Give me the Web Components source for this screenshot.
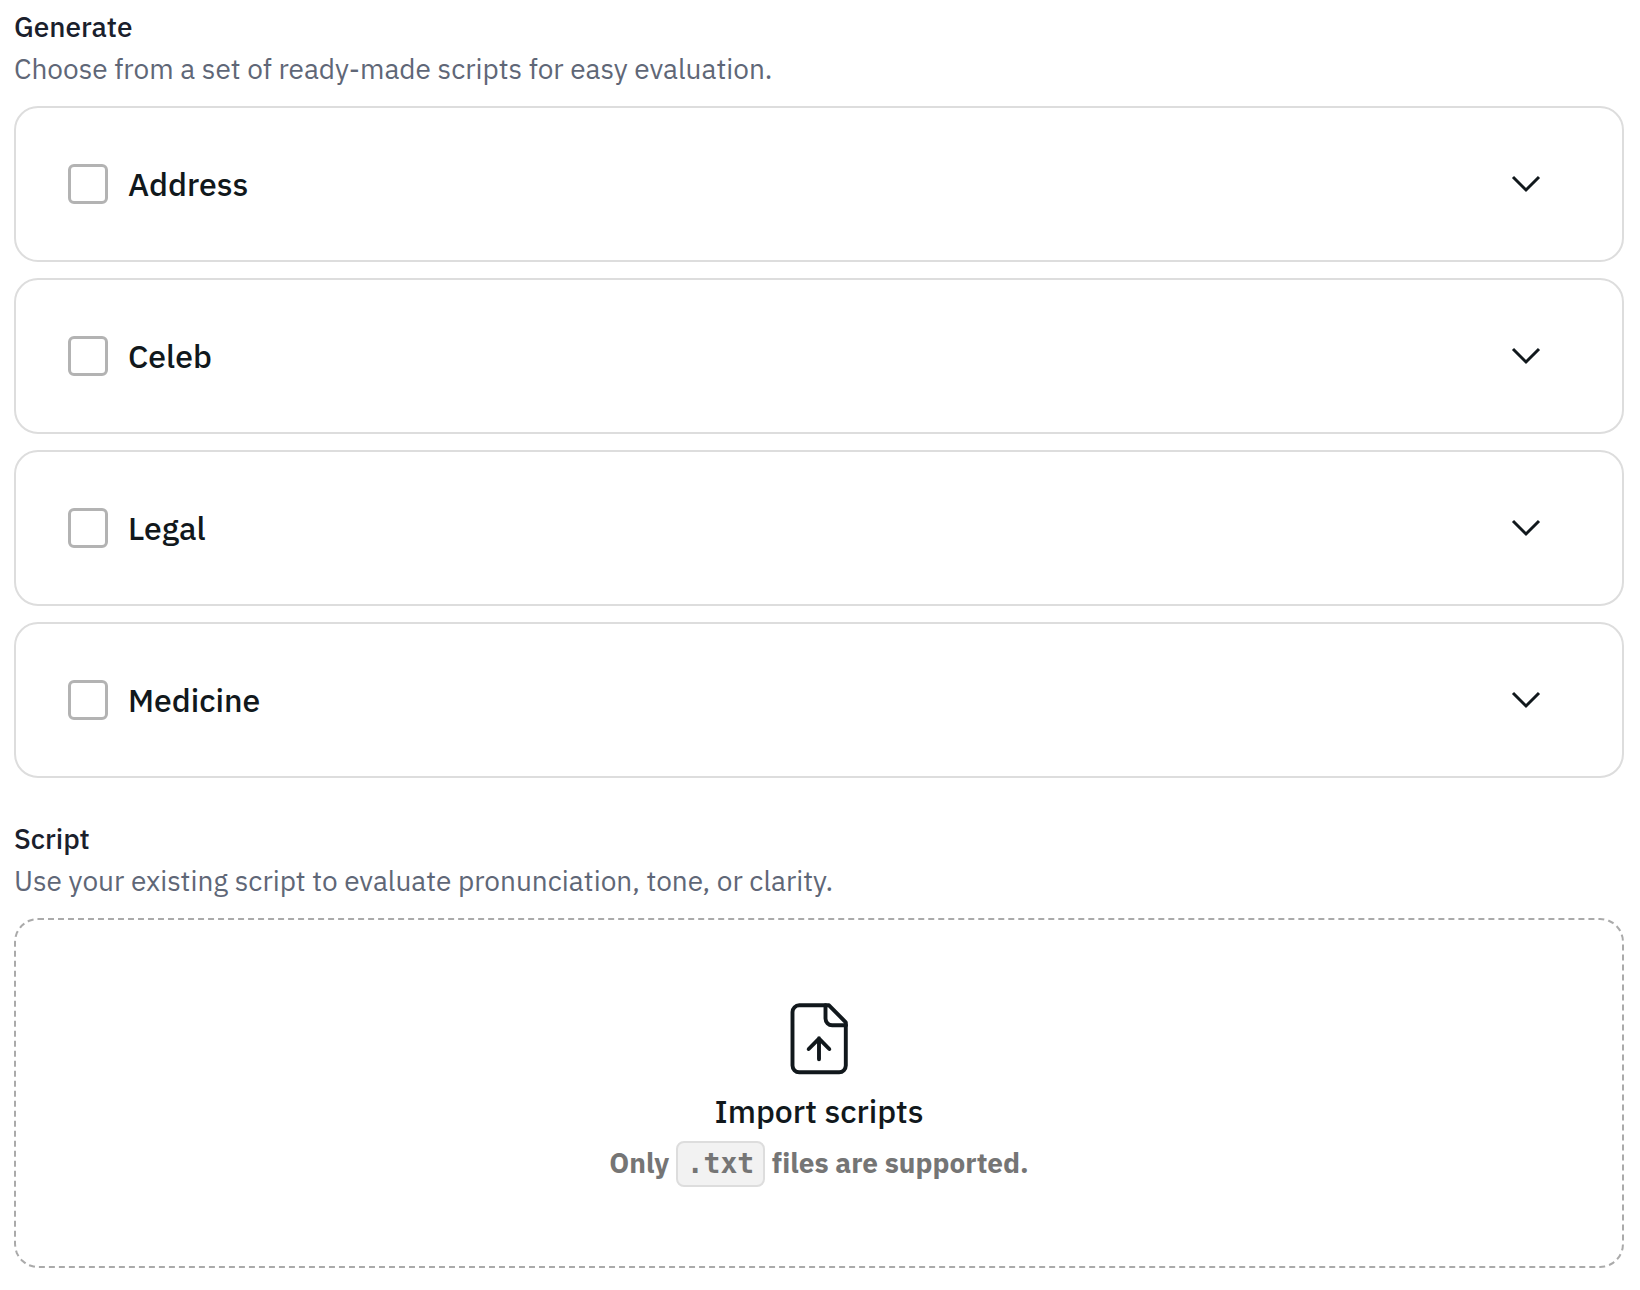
<!DOCTYPE html>
<html lang="en">
<head>
<meta charset="utf-8">
<meta name="viewport" content="width=device-width, initial-scale=1">
<title>Scripts</title>
<style>
  body {
    margin: 0;
    background: #fff;
    color: #11181c;
    font-family: "IBM Plex Sans", "Noto Sans", sans-serif;
  }
</style>
</head>
<body>
<script-page></script-page>

<script>
const define = (name, html, setup) => {
  const template = document.createElement('template');
  template.innerHTML = html;
  customElements.define(name, class extends HTMLElement {
    constructor() {
      super();
      this.attachShadow({ mode: 'open' }).append(template.content.cloneNode(true));
      if (setup) setup(this.shadowRoot);
    }
  });
};

// Titled block with a hint line and a stack of content
define('form-section', `
  <style>
    :host { display: block; }
    header { margin-bottom: 16px; font-size: 28px; line-height: 42px; }
    .hint { color: #5f6777; }
    .stack { display: flex; flex-direction: column; gap: 16px; }
  </style>
  <section>
    <header><slot name="title"></slot><div class="hint"><slot name="hint"></slot></div></header>
    <div class="stack"><slot></slot></div>
  </section>`);

// Selectable category with an expander
define('script-option', `
  <style>
    :host {
      display: flex; align-items: center; justify-content: space-between;
      box-sizing: border-box; min-height: 156px; padding: 0 80px 0 52px;
      border: 2px solid #ddd; border-radius: 24px;
    }
    label { display: flex; align-items: center; gap: 20px; font-size: 32px; line-height: 48px; font-weight: 500; }
    input {
      appearance: none; box-sizing: border-box; width: 40px; height: 40px; margin: 0;
      border: 3px solid #b3b3b3; border-radius: 6px; background: #fff;
    }
    input:checked { background: #11181c; box-shadow: inset 0 0 0 6px #fff; }
    button { display: flex; padding: 0; border: 0; background: none; color: inherit; cursor: pointer; }
    svg { display: block; }
  </style>
  <label><input type="checkbox"><span><slot></slot></span></label>
  <button type="button" aria-label="Expand" aria-expanded="false">
    <svg width="32" height="32" viewBox="0 0 32 32" fill="none" stroke="currentColor" stroke-width="3"><path d="M3 9 16 22 29 9"/></svg>
  </button>`, root => {
  const button = root.querySelector('button');
  button.addEventListener('click', () =>
    button.setAttribute('aria-expanded', button.getAttribute('aria-expanded') !== 'true'));
});

define('file-tag', `
  <style>
    :host {
      display: inline-block; padding: 0 9px 2px; border: 2px solid #ddd; border-radius: 8px;
      background: #f2f2f2; line-height: 39px;
    }
    code { font: inherit; font-family: "DejaVu Sans Mono", monospace; }
  </style>
  <code><slot></slot></code>`);

define('import-zone', `
  <style>
    :host { display: block; }
    button {
      display: flex; flex-direction: column; align-items: center; justify-content: center;
      box-sizing: border-box; width: 100%; min-height: 350px; padding: 0;
      border: 2px dashed #aaa; border-radius: 24px; background: none;
      color: inherit; font: inherit; cursor: pointer;
    }
    svg { display: block; margin-bottom: 8px; }
    .title { font-size: 32px; line-height: 48px; font-weight: 500; }
    .note {
      margin-top: 4px; font-size: 28px; line-height: 48px; font-weight: 700;
      font-variant-ligatures: none; color: #757575;
    }
  </style>
  <button type="button">
    <svg width="80" height="80" viewBox="9 10 80 80" fill="none" stroke="currentColor" stroke-width="3.9" stroke-linecap="round" stroke-linejoin="round" aria-hidden="true">
      <path d="M59 16.300H29.200a6.700 6.700 0 0 0-6.700 6.700v53.600a6.700 6.700 0 0 0 6.700 6.700h39.900a6.700 6.700 0 0 0 6.700-6.700V33.300z"/>
      <path d="M55.500 16.300v13.300a6.700 6.700 0 0 0 6.700 6.700H76"/>
      <path d="M49 70.300V49.300M38.700 60 49 49.600l10.300 10.400"/>
    </svg>
    <span class="title"><slot name="title"></slot></span>
    <span class="note"><slot></slot></span>
  </button>`);

define('script-page', `
  <style>
    :host { display: block; padding: 6px 16px 22px 14px; }
    main { display: flex; flex-direction: column; gap: 40px; }
    h2 { margin: 0; font: inherit; font-weight: 500; color: #1a202c; }
  </style>
  <main>
    <form-section>
      <h2 slot="title">Generate</h2>
      <span slot="hint">Choose from a set of ready-made scripts for easy evaluation.</span>
      <script-option>Address</script-option>
      <script-option>Celeb</script-option>
      <script-option>Legal</script-option>
      <script-option>Medicine</script-option>
    </form-section>
    <form-section>
      <h2 slot="title">Script</h2>
      <span slot="hint">Use your existing script to evaluate pronunciation, tone, or clarity.</span>
      <import-zone>
        <span slot="title">Import scripts</span>
        Only <file-tag>.txt</file-tag> files are supported.
      </import-zone>
    </form-section>
  </main>`);
</script>
</body>
</html>
